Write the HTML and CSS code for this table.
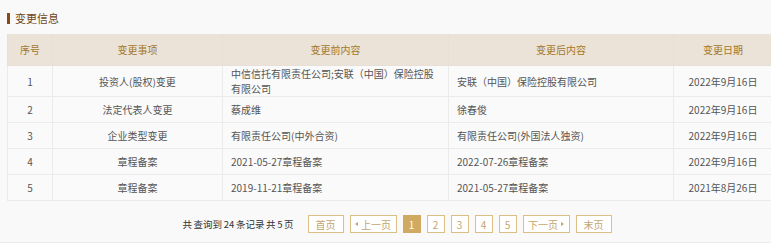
FILE: index.html
```html
<!DOCTYPE html>
<html lang="zh">
<head>
<meta charset="utf-8">
<link rel="stylesheet" href="styles.css">
</head>
<body>
<div class="panel">
  <h2 class="title"><span class="bar"></span>变更信息</h2>
  <table class="grid">
    <colgroup>
      <col class="c1"><col class="c2"><col class="c3"><col class="c4"><col class="c5">
    </colgroup>
    <thead>
      <tr><th>序号</th><th>变更事项</th><th>变更前内容</th><th>变更后内容</th><th>变更日期</th></tr>
    </thead>
    <tbody>
      <tr><td class="ctr">1</td><td class="ctr">投资人(股权)变更</td><td>中信信托有限责任公司;安联（中国）保险控股有限公司</td><td>安联（中国）保险控股有限公司</td><td class="ctr">2022年9月16日</td></tr>
      <tr><td class="ctr">2</td><td class="ctr">法定代表人变更</td><td>蔡成维</td><td>徐春俊</td><td class="ctr">2022年9月16日</td></tr>
      <tr><td class="ctr">3</td><td class="ctr">企业类型变更</td><td>有限责任公司(中外合资)</td><td>有限责任公司(外国法人独资)</td><td class="ctr">2022年9月16日</td></tr>
      <tr><td class="ctr">4</td><td class="ctr">章程备案</td><td>2021-05-27章程备案</td><td>2022-07-26章程备案</td><td class="ctr">2022年9月16日</td></tr>
      <tr><td class="ctr">5</td><td class="ctr">章程备案</td><td>2019-11-21章程备案</td><td>2021-05-27章程备案</td><td class="ctr">2021年8月26日</td></tr>
    </tbody>
  </table>
  <div class="pager">
    <span class="info">共 查询到 24 条记录 共 5 页</span>
    <span class="btn wide">首页</span>
    <span class="btn wide prev"><i class="tri-l"></i>上一页</span>
    <span class="btn num active">1</span>
    <span class="btn num">2</span>
    <span class="btn num">3</span>
    <span class="btn num">4</span>
    <span class="btn num">5</span>
    <span class="btn wide next">下一页<i class="tri-r"></i></span>
    <span class="btn wide">末页</span>
  </div>
</div>
</body>
</html>
```

FILE: styles.css
```css
html, body {
  margin: 0;
  padding: 0;
  background: #ffffff;
  overflow: hidden;
}
body {
  font-family: "Noto Sans CJK SC", "Microsoft YaHei", sans-serif;
  font-size: 10px;
  color: #555;
}
.panel {
  background: #f9f9f9;
  padding: 8px 0 0 7px;
  border-bottom: 1px solid #ececec;
  box-sizing: border-box;
  height: 243px;
}
.title {
  display: flex;
  align-items: center;
  margin: 0;
  height: 20px;
  font-size: 11px;
  font-weight: normal;
  color: #6f4520;
  line-height: 20px;
}
.bar {
  display: inline-block;
  width: 3px;
  height: 11px;
  background: #8a4a16;
  margin-right: 5px;
}
.grid {
  margin-top: 6px;
  border-collapse: collapse;
  table-layout: fixed;
  width: 765px;
  background: #fafafa;
}
.c1 { width: 45px; }
.c2 { width: 170px; }
.c3 { width: 226px; }
.c4 { width: 225px; }
.c5 { width: 99px; }
.grid th {
  height: 31px;
  padding: 0;
  background: #ebe3d7;
  color: #a3772c;
  font-weight: normal;
  font-size: 10px;
  border: 1px solid #e6e0d6;
  border-top: none;
}
.grid td {
  height: 25px;
  padding: 0 8px;
  line-height: 15px;
  border: 1px solid #ebebeb;
  color: #555;
  vertical-align: middle;
}
.grid td.ctr {
  text-align: center;
}
.pager {
  display: flex;
  align-items: center;
  justify-content: center;
  padding-left: 16px;
  margin-top: 14px;
  gap: 6px;
}
.info {
  color: #333;
  margin-right: 8px;
  font-size: 9.5px;
  word-spacing: -0.5px;
}
.btn {
  display: inline-flex;
  align-items: center;
  justify-content: center;
  height: 18px;
  box-sizing: border-box;
  border: 1px solid #dcbf86;
  color: #c3a46c;
  background: #fff;
}
.btn.num {
  width: 18px;
}
.btn.wide {
  padding: 0 7px;
  min-width: 36px;
}
.btn.prev, .btn.next {
  width: 47px;
  padding: 0;
}
.btn.active {
  background: #d1aa62;
  border-color: #d1aa62;
  color: #fff;
}
.tri-l {
  width: 0;
  height: 0;
  border-top: 2.5px solid transparent;
  border-bottom: 2.5px solid transparent;
  border-right: 3px solid #c3a46c;
  margin-right: 3px;
}
.tri-r {
  width: 0;
  height: 0;
  border-top: 2.5px solid transparent;
  border-bottom: 2.5px solid transparent;
  border-left: 3px solid #c3a46c;
  margin-left: 3px;
}
```
